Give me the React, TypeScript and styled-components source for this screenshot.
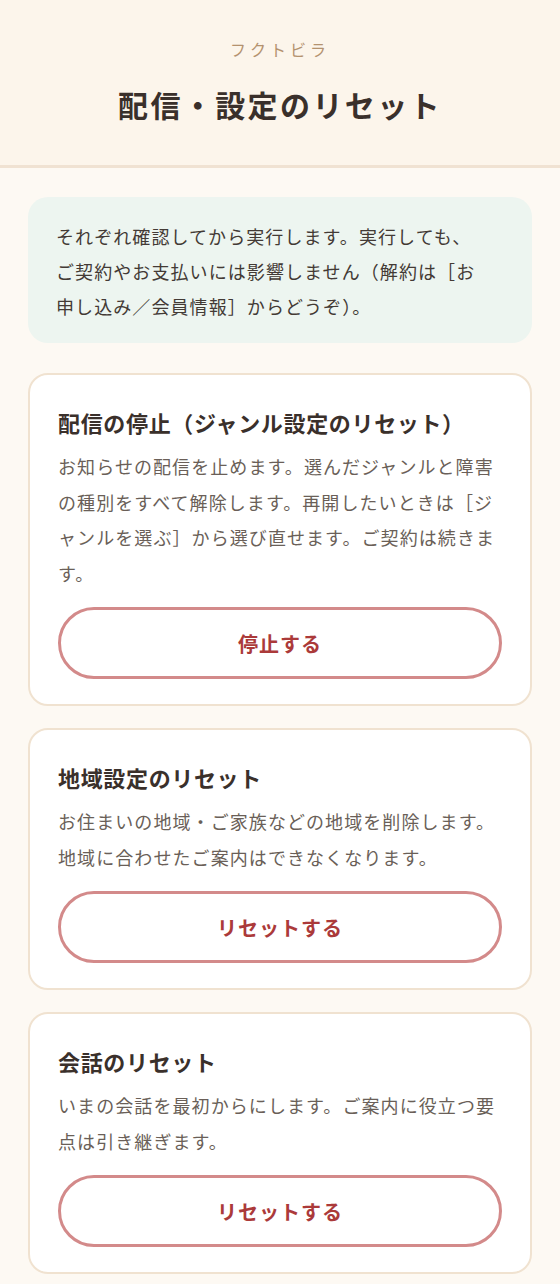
import React from "react";
import styled, { createGlobalStyle } from "styled-components";

const GlobalStyle = createGlobalStyle`
  body {
    margin: 0;
    background-color: #fdf9f3;
    font-family: "Noto Sans CJK JP", "Noto Sans", sans-serif;
    color: #3a302b;
  }
`;

const Header = styled.header`
  background-color: #fcf5eb;
  border-bottom: 3px solid #f0e2d2;
  padding: 36px 20px 39px;
  text-align: center;
`;

const Brand = styled.div`
  font-size: 16px;
  line-height: 26px;
  letter-spacing: 0.25em;
  color: #b4926f;
  margin-bottom: 20px;
`;

const Title = styled.h1`
  margin: 0;
  font-size: 30px;
  line-height: 44px;
  font-weight: 700;
  letter-spacing: 0.08em;
  color: #3a302b;
`;

const Main = styled.main`
  padding: 29px 28px 10px;
  display: flex;
  flex-direction: column;
  gap: 30px;
`;

const Notice = styled.p`
  margin: 0;
  background-color: #edf5f0;
  border-radius: 20px;
  padding: 22px 48px 19px 28px;
  font-size: 18px;
  line-height: 35px;
  letter-spacing: 0.06em;
  color: #433a35;
`;

const CardList = styled.div`
  display: flex;
  flex-direction: column;
  gap: 22px;
`;

const Card = styled.section`
  background-color: #ffffff;
  border: 2px solid #f0e2d0;
  border-radius: 20px;
  padding: 32px 28px 25px;
`;

const CardTitle = styled.h2`
  margin: 0;
  font-size: 22px;
  line-height: 30px;
  font-weight: 700;
  letter-spacing: 0.03em;
  color: #3a302b;
`;

const CardText = styled.p`
  margin: 12px 0 16px;
  font-size: 18px;
  line-height: 35.5px;
  letter-spacing: 0.06em;
  color: #6a5f58;
`;

const ActionButton = styled.button`
  display: block;
  width: 100%;
  height: 72px;
  box-sizing: border-box;
  background: #ffffff;
  border: 3px solid #d38a8a;
  border-radius: 999px;
  font-family: inherit;
  font-size: 20px;
  font-weight: 700;
  letter-spacing: 0.05em;
  color: #ab3a3a;
  cursor: pointer;
`;

const items = [
  {
    title: "配信の停止（ジャンル設定のリセット）",
    text: "お知らせの配信を止めます。選んだジャンルと障害の種別をすべて解除します。再開したいときは［ジャンルを選ぶ］から選び直せます。ご契約は続きます。",
    action: "停止する",
  },
  {
    title: "地域設定のリセット",
    text: "お住まいの地域・ご家族などの地域を削除します。地域に合わせたご案内はできなくなります。",
    action: "リセットする",
  },
  {
    title: "会話のリセット",
    text: "いまの会話を最初からにします。ご案内に役立つ要点は引き継ぎます。",
    action: "リセットする",
  },
];

const App = () => {
  return (
    <>
      <GlobalStyle />
      <Header>
        <Brand>フクトビラ</Brand>
        <Title>配信・設定のリセット</Title>
      </Header>
      <Main>
        <Notice>
          それぞれ確認してから実行します。実行しても、ご契約やお支払いには影響しません（解約は［お申し込み／会員情報］からどうぞ）。
        </Notice>
        <CardList>
          {items.map((item) => (
            <Card key={item.title}>
              <CardTitle>{item.title}</CardTitle>
              <CardText>{item.text}</CardText>
              <ActionButton type="button">{item.action}</ActionButton>
            </Card>
          ))}
        </CardList>
      </Main>
    </>
  );
};

export default App;
